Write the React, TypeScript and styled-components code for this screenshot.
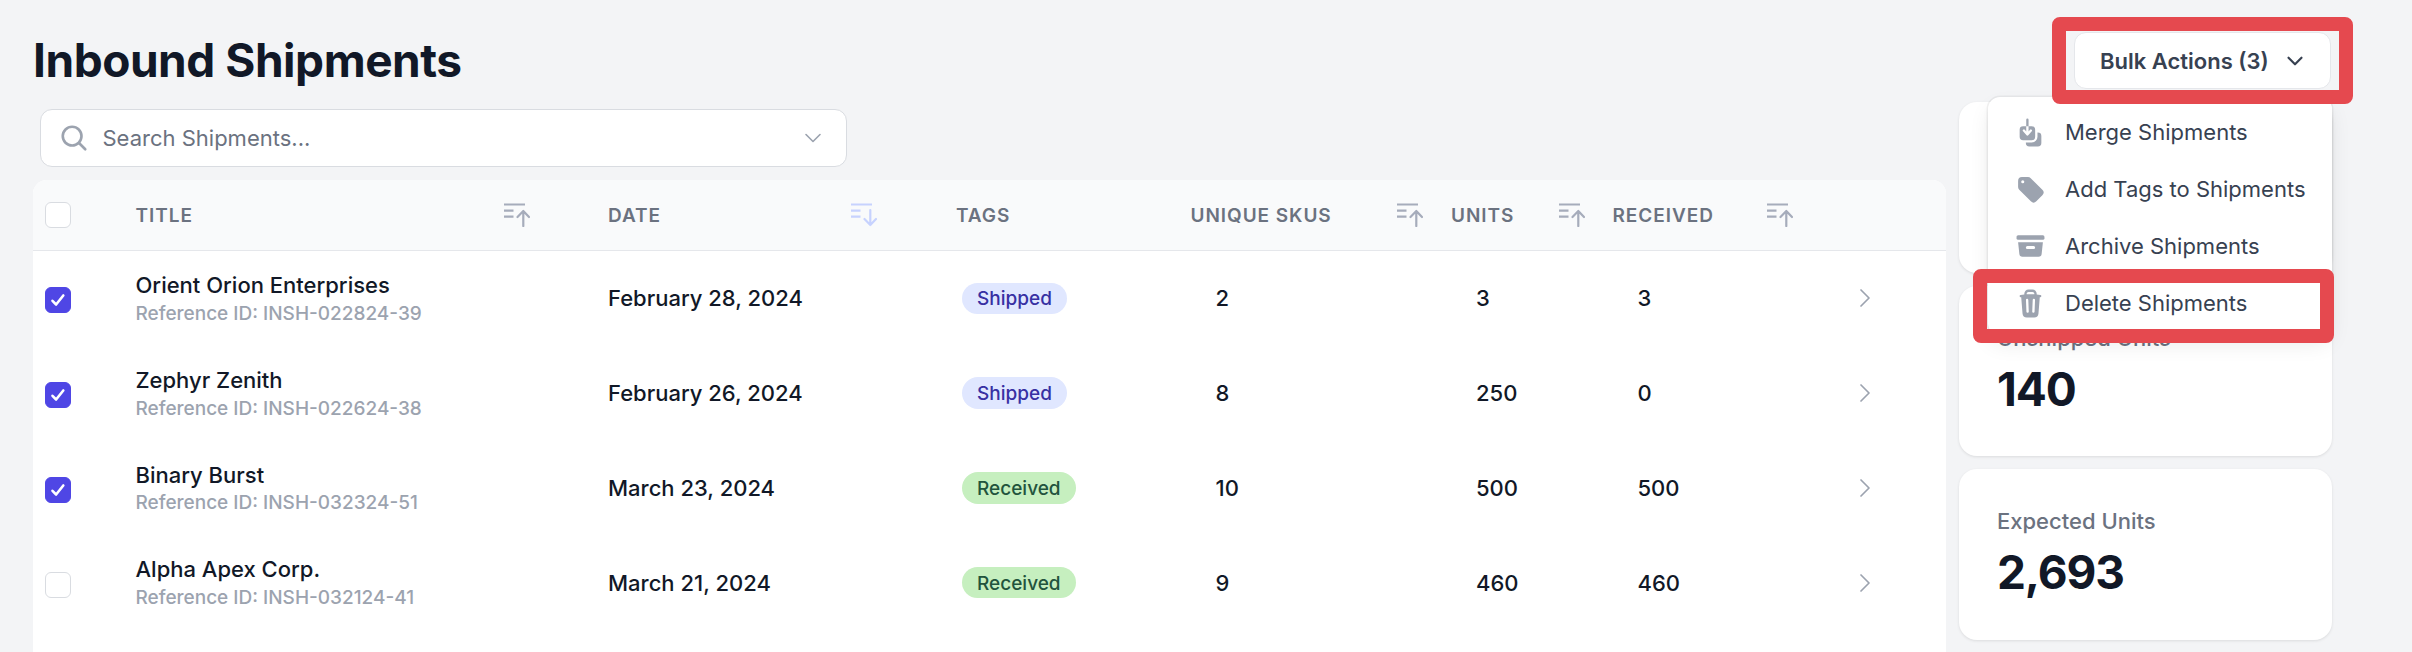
import React from 'react';
import styled, { createGlobalStyle } from 'styled-components';
import { ChevronDown, ChevronRight } from 'lucide-react';
import {
  HiMiniArrowDownOnSquareStack,
  HiMiniTag,
  HiMiniArchiveBox,
  HiMiniTrash,
  HiOutlineMagnifyingGlass,
} from 'react-icons/hi2';

const GlobalStyle = createGlobalStyle`
  html, body {
    margin: 0;
    padding: 0;
    background: #f3f4f6;
  }
  * {
    box-sizing: border-box;
  }
  body {
    font-family: Inter, "Liberation Sans", sans-serif;
    color: #111827;
  }
`;

const Page = styled.div`
  display: flex;
  gap: 13px;
  height: 652px;
  padding: 0 80px 0 33px;
  overflow: hidden;
`;

const Main = styled.main`
  display: flex;
  flex-direction: column;
  width: 1913px;
  padding-top: 30px;
`;

const Title = styled.h1`
  margin: 0 0 19px;
  font-size: 46px;
  line-height: 60px;
  font-weight: 700;
  letter-spacing: -0.01em;
  color: #111827;
`;

const SearchBar = styled.div`
  display: flex;
  align-items: center;
  width: 807px;
  height: 58px;
  margin: 0 0 13px 6.5px;
  padding: 0 18.5px 0 18px;
  background: #fff;
  border: 1.5px solid #d9dce1;
  border-radius: 12px;
  color: #9ca3af;
`;

const SearchText = styled.span`
  flex: 1;
  margin-left: 14px;
  font-size: 22px;
  color: #6b7280;
`;

const Table = styled.section`
  flex: 1;
  background: #fff;
  border-radius: 14px 14px 0 0;
  overflow: hidden;
`;

const columns = '102.5px 472.5px 348px 234.5px 260.5px 161.5px 245.5px 88px';

const HeadRow = styled.div`
  display: grid;
  grid-template-columns: ${columns};
  align-items: center;
  height: 71px;
  background: #f9fafb;
  border-bottom: 1.5px solid #e5e7eb;
`;

const HeadCell = styled.div<{ $pr?: number }>`
  display: flex;
  align-items: center;
  justify-content: space-between;
  padding-right: ${(p) => p.$pr ?? 0}px;
  font-size: 19px;
  font-weight: 600;
  letter-spacing: 0.05em;
  text-transform: uppercase;
  color: #6b7280;
`;

const SortIcon = styled.svg<{ $active?: boolean }>`
  display: block;
  flex: none;
  width: 26px;
  height: 24px;
  color: ${(p) => (p.$active ? '#c7d2fe' : '#a6acbb')};
`;

const Row = styled.div`
  display: grid;
  grid-template-columns: ${columns};
  align-items: center;
  height: 94.75px;
`;

const CheckCell = styled.div`
  padding-left: 12px;
`;

const Check = styled.span<{ $checked?: boolean; $offset?: boolean }>`
  display: flex;
  align-items: center;
  justify-content: center;
  width: 26px;
  height: 26px;
  margin-top: ${(p) => (p.$offset ? 4 : 0)}px;
  border-radius: 6px;
  background: ${(p) => (p.$checked ? '#4f46e5' : '#fff')};
  border: 1.5px solid ${(p) => (p.$checked ? '#4f46e5' : '#d9dce1')};
`;

const Name = styled.div`
  font-size: 22px;
  line-height: 30.8px;
  font-weight: 500;
  color: #111827;
`;

const Reference = styled.div`
  margin-top: 1px;
  font-size: 19px;
  line-height: 24.6px;
  font-weight: 500;
  color: #9ca3af;
`;

const DataText = styled.div<{ $pl?: number }>`
  padding-left: ${(p) => p.$pl ?? 0}px;
  font-size: 22px;
  font-weight: 500;
  color: #111827;
`;

const TagCell = styled.div`
  padding-left: 6px;
`;

const Pill = styled.span<{ $kind: 'Shipped' | 'Received' }>`
  display: inline-flex;
  align-items: center;
  height: 31.5px;
  padding: 1px 15px 0;
  border-radius: 16px;
  font-size: 19px;
  font-weight: 500;
  background: ${(p) => (p.$kind === 'Shipped' ? '#e0e7ff' : '#c6efbf')};
  color: ${(p) => (p.$kind === 'Shipped' ? '#3730a3' : '#22543d')};
`;

const RowArrow = styled.div`
  display: flex;
  color: #9ca3af;
  margin-left: -9px;
`;

const Aside = styled.aside`
  display: flex;
  flex-direction: column;
  gap: 13px;
  width: 373px;
  padding-top: 32px;
`;

const Anchor = styled.div`
  position: relative;
  align-self: flex-end;
  width: 257px;
  height: 57px;
  margin-right: 1px;
  z-index: 2;
`;

const BulkButton = styled.button`
  display: flex;
  align-items: center;
  justify-content: space-between;
  width: 100%;
  height: 100%;
  padding: 0 22px 0 25px;
  font-family: inherit;
  font-size: 22px;
  font-weight: 600;
  color: #374151;
  background: #fff;
  border: 1.5px solid #e5e7eb;
  border-radius: 12px;
`;

const Highlight = styled.span<{ $inset: string }>`
  position: absolute;
  inset: ${(p) => p.$inset};
  border: 14px solid #e5494f;
  border-radius: 8px;
  pointer-events: none;
  z-index: 3;
`;

const Menu = styled.div`
  position: absolute;
  top: 65px;
  right: -1px;
  width: 344px;
  height: 238px;
  padding-top: 6.5px;
  background: #fff;
  border-radius: 12px;
  box-shadow: 0 0 0 1.5px rgba(0, 0, 0, 0.05), 0 10px 22px -3px rgba(0, 0, 0, 0.1),
    0 4px 9px -2px rgba(0, 0, 0, 0.05);
`;

const MenuItem = styled.div`
  position: relative;
  display: flex;
  align-items: center;
  gap: 19.5px;
  height: 57px;
  padding-left: 26.5px;
  font-size: 22px;
  color: #374151;
`;

const MenuIcon = styled.span`
  display: flex;
  flex: none;
  align-items: center;
  justify-content: center;
  width: 31px;
  color: #9ca3af;
`;

const StatCard = styled.div`
  height: 170.5px;
  padding: 37px 38px 0;
  background: #fff;
  border-radius: 18px;
  box-shadow: 0 1px 3px rgba(0, 0, 0, 0.1);
`;

const StatLabel = styled.div`
  font-size: 22px;
  line-height: 31px;
  font-weight: 500;
  color: #6b7280;
`;

const StatValue = styled.div`
  margin-top: 5px;
  font-size: 46px;
  line-height: 61px;
  font-weight: 700;
  letter-spacing: -0.025em;
  color: #111827;
`;

const SortGlyph = ({ down, active }: { down?: boolean; active?: boolean }) => (
  <SortIcon $active={active} viewBox="0 0 26 24" fill="none" stroke="currentColor" strokeWidth="2.2">
    <path d="M0 1.5h21M0 7.7h9.5M0 13.7h9.5" />
    {down ? (
      <path d="M19.3 7v15M13.5 16l5.8 6 5.7-6" strokeLinecap="round" strokeLinejoin="round" />
    ) : (
      <path d="M19.3 23V8M13.5 14l5.8-6 5.7 6" strokeLinecap="round" strokeLinejoin="round" />
    )}
  </SortIcon>
);

const CheckMark = () => (
  <svg width="16" height="16" viewBox="0 0 16 16" fill="none">
    <path
      d="M2.5 8.8l3.6 3.7 7.2-9"
      stroke="#fff"
      strokeWidth="2.6"
      strokeLinecap="round"
      strokeLinejoin="round"
    />
  </svg>
);

type Shipment = {
  title: string;
  reference: string;
  date: string;
  tag: 'Shipped' | 'Received';
  skus: number;
  units: number;
  received: number;
  checked: boolean;
};

const shipments: Shipment[] = [
  { title: 'Orient Orion Enterprises', reference: 'INSH-022824-39', date: 'February 28, 2024', tag: 'Shipped', skus: 2, units: 3, received: 3, checked: true },
  { title: 'Zephyr Zenith', reference: 'INSH-022624-38', date: 'February 26, 2024', tag: 'Shipped', skus: 8, units: 250, received: 0, checked: true },
  { title: 'Binary Burst', reference: 'INSH-032324-51', date: 'March 23, 2024', tag: 'Received', skus: 10, units: 500, received: 500, checked: true },
  { title: 'Alpha Apex Corp.', reference: 'INSH-032124-41', date: 'March 21, 2024', tag: 'Received', skus: 9, units: 460, received: 460, checked: false },
];

const App = () => {
  return (
    <Page>
      <GlobalStyle />
      <Main>
        <Title>Inbound Shipments</Title>
        <SearchBar>
          <HiOutlineMagnifyingGlass size={30} strokeWidth={2.1} />
          <SearchText>Search Shipments...</SearchText>
          <ChevronDown size={28} strokeWidth={1.4} />
        </SearchBar>
        <Table>
          <HeadRow>
            <CheckCell>
              <Check />
            </CheckCell>
            <HeadCell $pr={78}>
              Title
              <SortGlyph />
            </HeadCell>
            <HeadCell $pr={79}>
              Date
              <SortGlyph down active />
            </HeadCell>
            <HeadCell>Tags</HeadCell>
            <HeadCell $pr={28}>
              Unique SKUs
              <SortGlyph />
            </HeadCell>
            <HeadCell $pr={27.5}>
              Units
              <SortGlyph />
            </HeadCell>
            <HeadCell $pr={65}>
              Received
              <SortGlyph />
            </HeadCell>
            <div />
          </HeadRow>
          {shipments.map((s) => (
            <Row key={s.reference}>
              <CheckCell>
                <Check $checked={s.checked} $offset>
                  {s.checked && <CheckMark />}
                </Check>
              </CheckCell>
              <div>
                <Name>{s.title}</Name>
                <Reference>Reference ID: {s.reference}</Reference>
              </div>
              <DataText>{s.date}</DataText>
              <TagCell>
                <Pill $kind={s.tag}>{s.tag}</Pill>
              </TagCell>
              <DataText $pl={25}>{s.skus}</DataText>
              <DataText $pl={25}>{s.units}</DataText>
              <DataText $pl={25}>{s.received}</DataText>
              <RowArrow>
                <ChevronRight size={32} strokeWidth={1.3} />
              </RowArrow>
            </Row>
          ))}
        </Table>
      </Main>
      <Aside>
        <Anchor>
          <Menu>
            <MenuItem>
              <MenuIcon>
                <HiMiniArrowDownOnSquareStack size={31} />
              </MenuIcon>
              Merge Shipments
            </MenuItem>
            <MenuItem>
              <MenuIcon>
                <HiMiniTag size={33} />
              </MenuIcon>
              Add Tags to Shipments
            </MenuItem>
            <MenuItem>
              <MenuIcon>
                <HiMiniArchiveBox size={32} />
              </MenuIcon>
              Archive Shipments
            </MenuItem>
            <MenuItem>
              <MenuIcon>
                <HiMiniTrash size={31} />
              </MenuIcon>
              Delete Shipments
              <Highlight $inset="-5.5px -2px -11.5px -15px" />
            </MenuItem>
          </Menu>
          <BulkButton>
            Bulk Actions (3)
            <ChevronDown size={26} strokeWidth={2} />
          </BulkButton>
          <Highlight $inset="-15px -22px" />
        </Anchor>
        <StatCard />
        <StatCard>
          <StatLabel>Unshipped Units</StatLabel>
          <StatValue>140</StatValue>
        </StatCard>
        <StatCard>
          <StatLabel>Expected Units</StatLabel>
          <StatValue>2,693</StatValue>
        </StatCard>
      </Aside>
    </Page>
  );
};

export default App;
